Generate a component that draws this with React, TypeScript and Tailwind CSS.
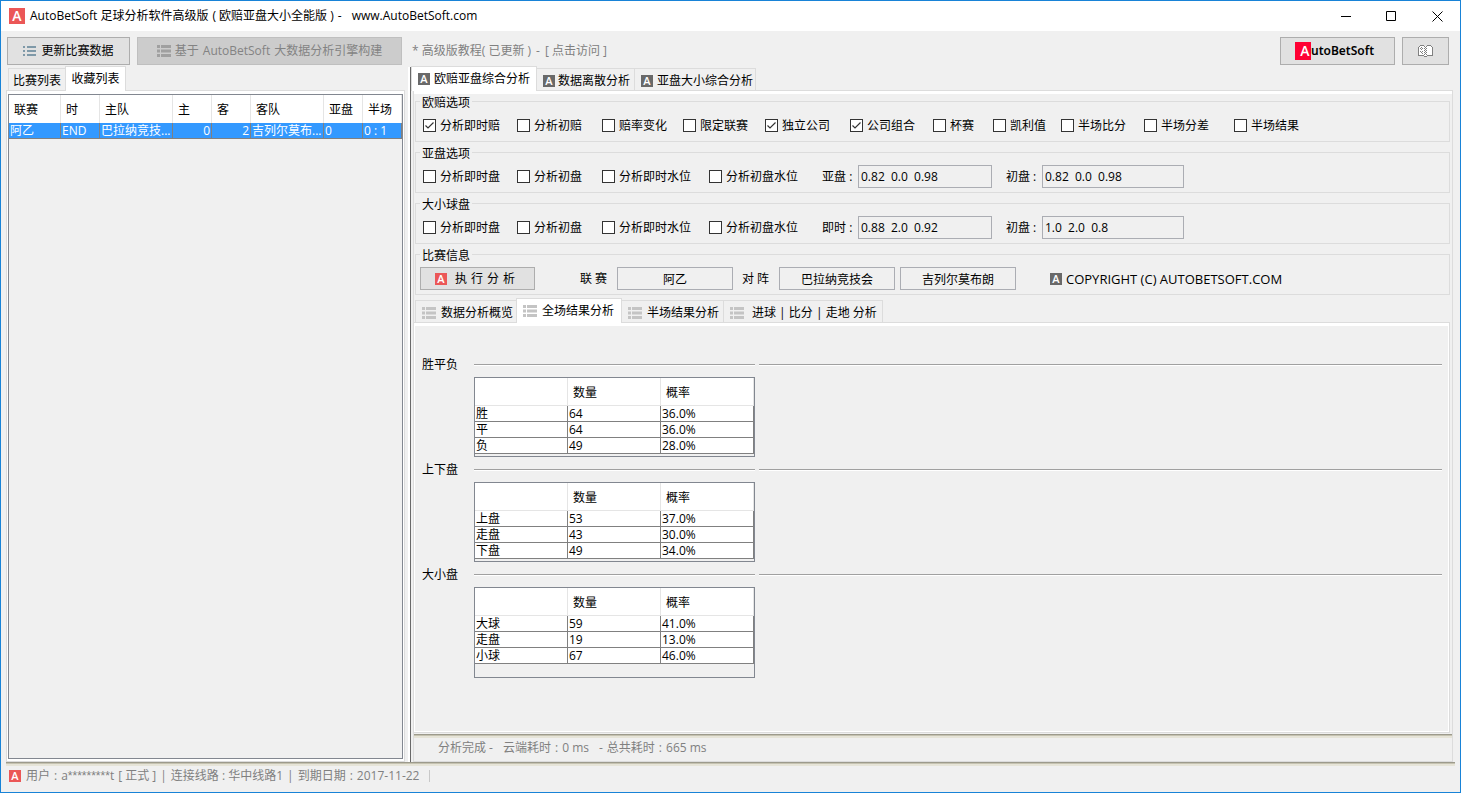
import type { ReactNode } from 'react'

interface Stat {
  title: string
  rows: [string, string, string][]
  box: string
}

const matchCols = [
  { name: '联赛', w: 'w-[52px]' },
  { name: '时', w: 'w-[39px]' },
  { name: '主队', w: 'w-[73px]' },
  { name: '主', w: 'w-[39px]' },
  { name: '客', w: 'w-[39px]' },
  { name: '客队', w: 'w-[73px]' },
  { name: '亚盘', w: 'w-[39px]' },
  { name: '半场', w: '' },
]

const euroOptions = [
  { label: '分析即时赔', on: true },
  { label: '分析初赔', on: false },
  { label: '赔率变化', on: false },
  { label: '限定联赛', on: false },
  { label: '独立公司', on: true },
  { label: '公司组合', on: true },
  { label: '杯赛', on: false },
  { label: '凯利值', on: false },
  { label: '半场比分', on: false },
  { label: '半场分差', on: false },
  { label: '半场结果', on: false },
]

const lineOptions = ['分析即时盘', '分析初盘', '分析即时水位', '分析初盘水位']

const stats: Stat[] = [
  { title: '胜平负', box: 'h-20', rows: [['胜', '64', '36.0%'], ['平', '64', '36.0%'], ['负', '49', '28.0%']] },
  { title: '上下盘', box: 'h-20', rows: [['上盘', '53', '37.0%'], ['走盘', '43', '30.0%'], ['下盘', '49', '34.0%']] },
  { title: '大小盘', box: 'h-[91px]', rows: [['大球', '59', '41.0%'], ['走盘', '19', '13.0%'], ['小球', '67', '46.0%']] },
]

function Badge({ className }: { className: string }) {
  return (
    <span
      aria-hidden="true"
      className={`inline-flex shrink-0 items-center justify-center font-['Open_Sans'] font-semibold text-white ${className}`}
    >
      A
    </span>
  )
}

function ListIcon({ className = 'text-[#c4c4c4]' }: { className?: string }) {
  return (
    <svg className={`shrink-0 ${className}`} width="14" height="12" viewBox="0 0 14 12" fill="currentColor" aria-hidden="true">
      <path d="M0 0h3v3H0zM4 0h10v3H4zM0 4.5h3v3H0zM4 4.5h10v3H4zM0 9h3v3H0zM4 9h10v3H4z" />
    </svg>
  )
}

function CheckOption({ label, on = false }: { label: string; on?: boolean }) {
  return (
    <label className="flex items-center gap-1 whitespace-nowrap">
      <span className="relative size-[13px] shrink-0">
        <input type="checkbox" defaultChecked={on} className="peer block size-[13px] appearance-none border border-[#333] bg-white" />
        <svg
          className="pointer-events-none absolute inset-0 hidden peer-checked:block"
          width="13" height="13" viewBox="0 0 13 13" fill="none" stroke="#333" strokeWidth="1.2"
        >
          <path d="M2.5 6.5 5 9l5.5-5.5" />
        </svg>
      </span>
      {label}
    </label>
  )
}

function Group({ title, children }: { title: string; children: ReactNode }) {
  return (
    <section aria-label={title} className="relative h-[41px] border border-[#dcdcdc]">
      <h2 className="absolute -top-[7px] left-1 bg-[#f0f0f0] px-0.5">{title}</h2>
      {children}
    </section>
  )
}

function LineGroup({ title, id, first, a, b }: { title: string; id: string; first: string; a: string; b: string }) {
  return (
    <Group title={title}>
      <div className="grid h-full grid-cols-[94px_85px_107px_113px_36px_148px_36px_142px] items-center pt-2 pl-[7px]">
        {lineOptions.map(o => <CheckOption key={o} label={o} />)}
        <label htmlFor={`${id}-now`}>{first} :</label>
        <input
          id={`${id}-now`} defaultValue={a}
          className="h-[23px] w-[134px] border border-[#abadb3] bg-[#f0f0f0] px-0.5 whitespace-pre"
        />
        <label htmlFor={`${id}-start`}>初盘 :</label>
        <input
          id={`${id}-start`} defaultValue={b}
          className="h-[23px] w-[142px] border border-[#abadb3] bg-[#f0f0f0] px-0.5 whitespace-pre"
        />
      </div>
    </Group>
  )
}

function Tab({ active, className = '', children }: { active?: boolean; className?: string; children: ReactNode }) {
  return (
    <button
      type="button"
      role="tab"
      aria-selected={!!active}
      className={`flex items-center whitespace-pre border border-b-0 border-[#dcdcdc] ${
        active ? 'relative z-10 -mx-px -mb-px h-[25px] bg-white' : 'h-[22px] bg-[#f0f0f0] pt-0.5'
      } ${className}`}
    >
      {children}
    </button>
  )
}

// sunken edge above a status line
function Edge() {
  return (
    <div className="h-1 shrink-0 border-t border-[#9c9a8c] bg-[#e6e4d8]">
      <div className="h-px bg-[#c5c2b0]" />
    </div>
  )
}

function StatBlock({ title, rows, box }: Stat) {
  return (
    <section className="grid grid-cols-[52px_281px_1fr] gap-y-1">
      <h2>{title}</h2>
      <div className="mt-[7px] h-0.5 border-t border-[#a0a0a0] bg-white" />
      <div className="mt-[7px] ml-1 h-0.5 border-t border-[#a0a0a0] bg-white" />
      <div className={`col-start-2 border border-[#828790] ${box}`}>
        <table className="w-full table-fixed border-separate border-spacing-0 text-left">
          <thead>
            <tr className="h-7 bg-white">
              {['', '数量', '概率'].map(h => (
                <th key={h} className="border-r border-b border-[#e5e5e5] p-0 pt-0.5 pl-[5px] font-normal">{h}</th>
              ))}
            </tr>
          </thead>
          <tbody>
            {rows.map(r => (
              <tr key={r[0]} className="h-4 bg-white leading-[15px]">
                {r.map((c, i) => (
                  <td key={i} className="border-r border-b border-[#808080] p-0 pl-px">{c}</td>
                ))}
              </tr>
            ))}
          </tbody>
        </table>
      </div>
    </section>
  )
}

export default function App() {
  return (
    <div className="flex min-h-screen flex-col border border-[#1883d7] bg-[#f0f0f0] font-['Open_Sans','Noto_Sans_CJK_SC',sans-serif] text-[12px] leading-4 text-black">
      {/* Title bar */}
      <header className="flex h-[30px] shrink-0 items-center bg-white pl-2">
        <Badge className="size-4 bg-[#eb5757] text-[14px]" />
        <h1 className="ml-[5px] flex whitespace-pre">
          <span>AutoBetSoft 足球分析软件高级版</span>
          <span className="ml-1">( 欧赔亚盘大小全能版 )</span>
          <span className="ml-1">-</span>
          <span className="ml-2.5">www.AutoBetSoft.com</span>
        </h1>
        <div className="ml-auto flex">
          <button type="button" aria-label="最小化" className="flex h-[29px] w-[46px] items-center justify-center">
            <svg width="11" height="11" viewBox="0 0 11 11" stroke="#000" fill="none"><path d="M1 5.5h10" /></svg>
          </button>
          <button type="button" aria-label="最大化" className="flex h-[29px] w-[46px] items-center justify-center">
            <svg width="11" height="11" viewBox="0 0 11 11" stroke="#000" fill="none"><path d="M.5.5h9v9h-9z" /></svg>
          </button>
          <button type="button" aria-label="关闭" className="flex h-[29px] w-[46px] items-center justify-center">
            <svg width="11" height="11" viewBox="0 0 11 11" stroke="#000" fill="none"><path d="m.5.5 10 10m0-10-10 10" /></svg>
          </button>
        </div>
      </header>

      {/* Toolbar */}
      <div className="flex h-9 shrink-0 items-center pt-1 pr-[11px] pl-1.5">
        <button type="button" className="flex h-7 w-[123px] items-center justify-center gap-[5px] border border-[#adadad] bg-[#e1e1e1]">
          <svg width="13" height="11" viewBox="0 0 13 11" fill="#7f99a8" aria-hidden="true">
            <path d="M0 0h2v2H0zM4 0h9v2H4zM0 4h2v2H0zM4 4h9v2H4zM0 8h2v2H0zM4 8h9v2H4z" />
          </svg>
          更新比赛数据
        </button>
        <button type="button" disabled className="ml-[7px] flex h-7 w-[265px] items-center justify-center gap-1 border border-[#bfbfbf] bg-[#ccc] text-[#838383]">
          <ListIcon className="text-[#a0a0a0]" />
          <span className="flex gap-1"><span>基于</span><span>AutoBetSoft</span><span>大数据分析引擎构建</span></span>
        </button>
        <a href="#tutorial" className="ml-2.5 flex gap-[5px] whitespace-pre text-[#808080]">
          <span>* 高级版教程( 已更新 )</span>
          <span>-</span>
          <span>[ 点击访问 ]</span>
        </a>
        <button type="button" className="ml-auto flex h-7 w-[115px] items-center border border-[#adadad] bg-[#e1e1e1] pl-3.5 font-['Noto_Sans'] font-semibold">
          <Badge className="h-[18px] w-4 bg-[#ff0033] pl-1 text-[14px]" />
          utoBetSoft
        </button>
        <button type="button" aria-label="帮助" className="ml-[7px] flex h-7 w-[47px] items-center justify-center border border-[#adadad] bg-[#e1e1e1]">
          <svg width="15" height="12" viewBox="0 0 15 12" shapeRendering="crispEdges" aria-hidden="true">
            <path fill="#fff" d="M1 1h13v10H1z" />
            <path fill="#808080" d="M2 0h4v1H2zM9 0h4v1H9zM1 1h1v1H1zM6 1h1v1H6zM8 1h1v1H8zM13 1h1v1h-1zM0 2h1v9H0zM14 2h1v9h-1zM1 10h5v1H1zM9 10h5v1H9zM6 11h3v1H6z" />
            <path fill="#808080" d="M7 2h1v1H7zM6 3h1v1H6zM8 3h1v1H8zM7 4h1v1H7zM6 5h1v1H6zM8 5h1v1H8zM7 6h1v1H7zM6 7h1v1H6zM8 7h1v1H8zM7 8h1v1H7zM6 9h1v1H6zM8 9h1v1H8zM3 2h1v1H3zM2 3h1v1H2zM4 3h1v1H4zM3 4h1v1H3zM2 6h1v1H2zM4 6h1v1H4zM3 7h1v1H3zM4 8h1v1H4z" />
          </svg>
        </button>
      </div>

      {/* Workspace */}
      <div className="flex flex-1 pr-[7px] pl-[5px]">
        <aside className="flex w-[399px] shrink-0 flex-col">
          <div role="tablist" className="flex h-[23px] items-end pl-0.5">
            <Tab className="w-[58px] justify-center">比赛列表</Tab>
            <Tab active className="w-[61px] justify-center">收藏列表</Tab>
          </div>
          <div className="flex-1 border border-[#dcdcdc] bg-white px-px pt-[3px] pb-0.5">
            <div className="h-full border border-[#828790] bg-[#f0f0f0]">
              <table className="w-full table-fixed border-separate border-spacing-0 text-left">
                <thead>
                  <tr className="h-7 bg-white">
                    {matchCols.map(c => (
                      <th key={c.name} className={`border-r border-[#e5e5e5] p-0 pt-0.5 pl-[5px] font-normal whitespace-nowrap ${c.w}`}>{c.name}</th>
                    ))}
                  </tr>
                </thead>
                <tbody>
                  <tr className="h-4 bg-[#3399ff] leading-[15px] whitespace-nowrap text-white [&>td]:border-r [&>td]:border-b [&>td]:border-[#808080] [&>td]:p-0 [&>td]:px-px">
                    <td>阿乙</td>
                    <td>END</td>
                    <td>巴拉纳竞技...</td>
                    <td className="text-right">0</td>
                    <td className="text-right">2</td>
                    <td>吉列尔莫布...</td>
                    <td>0</td>
                    <td>0 : 1</td>
                  </tr>
                </tbody>
              </table>
            </div>
          </div>
        </aside>
        <div className="w-[5px] border-r-2 border-white" />
        <div className="mr-0.5 w-px bg-[#696969]" />

        <main className="flex min-w-0 flex-1 flex-col">
          <div role="tablist" className="-ml-px flex h-[23px] items-end">
            <Tab active className="w-[126px] gap-1 pl-1.5">
              <Badge className="size-3 bg-[#696969] text-[11px]" />
              欧赔亚盘综合分析
            </Tab>
            <Tab className="w-[99px] gap-[3px] pl-1.5">
              <Badge className="size-3 bg-[#696969] text-[11px]" />
              数据离散分析
            </Tab>
            <Tab className="-ml-px w-[122px] gap-1 pl-1.5">
              <Badge className="size-3 bg-[#696969] text-[11px]" />
              亚盘大小综合分析
            </Tab>
          </div>

          <div className="flex flex-1 flex-col border border-[#dcdcdc]">
            <div className="h-[3px] bg-white" />
            <div className="flex flex-col gap-2.5 pt-[7px] pr-0.5 pl-px">
              <Group title="欧赔选项">
                <div className="grid h-full grid-cols-[94px_85px_81px_82px_85px_83px_60px_68px_83px_90px_auto] items-center justify-start pt-2 pl-[7px]">
                  {euroOptions.map(o => <CheckOption key={o.label} label={o.label} on={o.on} />)}
                </div>
              </Group>
              <LineGroup title="亚盘选项" id="asian" first="亚盘" a="0.82  0.0  0.98" b="0.82  0.0  0.98" />
              <LineGroup title="大小球盘" id="goals" first="即时" a="0.88  2.0  0.92" b="1.0  2.0  0.8" />
              <Group title="比赛信息">
                <div className="flex h-full items-center pt-2 pl-1">
                  <button type="button" className="flex h-[23px] w-[115px] items-center gap-2 border border-[#adadad] bg-[#e1e1e1] pl-3.5 whitespace-pre">
                    <Badge className="size-3 bg-[#eb5757] text-[11px]" />
                    <span className="flex gap-1"><span>执</span><span>行</span><span>分</span><span>析</span></span>
                  </button>
                  <label htmlFor="league" className="ml-[45px] w-[37px]">联 赛</label>
                  <input id="league" defaultValue="阿乙" className="h-[23px] w-[116px] border border-[#abadb3] text-center" />
                  <label htmlFor="home" className="ml-[9px] w-[37px]">对 阵</label>
                  <input id="home" defaultValue="巴拉纳竞技会" className="h-[23px] w-[116px] border border-[#abadb3] text-center" />
                  <input aria-label="客队" defaultValue="吉列尔莫布朗" className="ml-[5px] h-[23px] w-[116px] border border-[#abadb3] text-center" />
                  <Badge className="ml-[34px] size-3 bg-[#696969] text-[11px]" />
                  <span className="ml-1 text-[13px]">COPYRIGHT (C) AUTOBETSOFT.COM</span>
                </div>
              </Group>
            </div>

            {/* Result tabs */}
            <div role="tablist" className="mt-1 flex h-[23px] items-end pl-px">
              <Tab className="w-[102px] gap-[5px] pl-1.5"><ListIcon />数据分析概览</Tab>
              <Tab active className="w-[106px] gap-[5px] pl-1.5"><ListIcon />全场结果分析</Tab>
              <Tab className="w-[103px] gap-[5px] pl-1.5"><ListIcon />半场结果分析</Tab>
              <Tab className="-ml-px w-[160px] gap-2 pl-1.5"><ListIcon />进球 | 比分 | 走地 分析</Tab>
            </div>
            <div className="mr-0.5 flex-1 border border-l-0 border-[#dcdcdc]">
              <div className="h-full border border-t-[3px] border-white">
                <div className="flex flex-col gap-[5px] pt-[31px] pr-1.5 pl-[7px]">
                  {stats.map(s => <StatBlock key={s.title} {...s} />)}
                </div>
              </div>
            </div>
            <div className="mt-px"><Edge /></div>
            <p className="flex gap-2.5 pt-0.5 pb-[5px] pl-6 whitespace-pre text-[#808080]">
              <span>分析完成 -</span>
              <span className="flex gap-1"><span>云端耗时</span><span>:</span><span>0 ms</span></span>
              <span className="flex gap-1"><span>-</span><span>总共耗时</span><span>:</span><span>665 ms</span></span>
            </p>
          </div>
        </main>
      </div>

      {/* Status bar */}
      <footer className="mx-[5px] h-[30px] shrink-0">
        <Edge />
        <div className="flex items-center pt-0.5 pl-[3px] text-[#808080]">
          <Badge className="mr-[5px] size-3 bg-[#eb5757] text-[11px]" />
          <span className="flex items-center gap-1">
            <span>用户</span>
            <span>:</span>
            <span>a<span className="font-['Liberation_Sans']">*********</span>t</span>
            <span>[ 正式 ]</span>
            <span>|</span>
            <span>连接线路 : 华中线路1</span>
            <span>|</span>
            <span>到期日期</span>
            <span>:</span>
            <span>2017-11-22</span>
            <span className="ml-1.5 h-3 w-px bg-[#c8c8c8]" />
          </span>
        </div>
      </footer>
    </div>
  )
}
